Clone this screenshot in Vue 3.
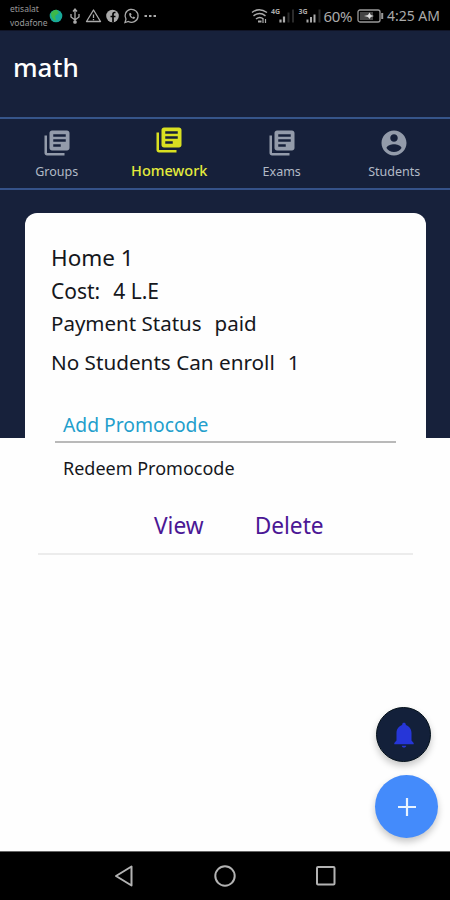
<script setup>
const tabs = [
  { label: 'Groups', icon: 'library', active: false },
  { label: 'Homework', icon: 'library', active: true },
  { label: 'Exams', icon: 'library', active: false },
  { label: 'Students', icon: 'account', active: false },
]
const paths = {
  library: 'M4 6H2v14c0 1.1.9 2 2 2h14v-2H4V6zm16-4H8c-1.100 0-2 .9-2 2v12c0 1.100.9 2 2 2h12c1.100 0 2-.9 2-2V4c0-1.100-.9-2-2-2zm-1 9H9V9h10v2zm-4 4H9v-2h6v2zm4-8H9V5h10v2z',
  account: 'M12 2C6.480 2 2 6.480 2 12s4.480 10 10 10 10-4.480 10-10S17.520 2 12 2zm0 3c1.660 0 3 1.340 3 3s-1.340 3-3 3-3-1.340-3-3 1.340-3 3-3zm0 14.200c-2.500 0-4.710-1.280-6-3.220.03-1.990 4-3.080 6-3.080 1.990 0 5.970 1.090 6 3.080-1.290 1.940-3.500 3.220-6 3.220z',
}
</script>

<template>
  <div class="screen">
    <div class="status">
      <div class="carriers"><span>etisalat</span><span>vodafone</span></div>
      <svg class="notes" width="110" height="18" viewBox="0 0 110 18" fill="none" stroke="#aaa" stroke-width="1.300">
        <circle cx="7" cy="9" r="6.300" fill="#18a999" stroke="none" />
        <path d="M2 6q4-4 6-3l2 3-4 3 1 5q-5-2-5-8z" fill="#3cb84a" stroke="none" />
        <path d="M26 3v12M22 7v3l4 3 4-3V7M24 4.500l2-2.500 2 2.500" />
        <circle cx="26" cy="15" r="1.200" fill="#aaa" />
        <path d="M44.500 3l7 11.500H37.500z" stroke-linejoin="round" /><path d="M44.500 7.500v3.500M44.500 12v1.300" />
        <circle cx="63.500" cy="9" r="6.300" fill="#aaa" stroke="none" />
        <path d="M66.500 5.500h-1q-1.500 0-1.500 2V15M61.500 9.500h5" stroke="#000" stroke-width="1.700" />
        <path d="M76 15.500l1-3.300a6.500 6.500 0 1 1 2.400 2.300z" />
        <path d="M80 6.500q.5 4.500 5 5.500l1.300-1.400-1.700-1-.9.8q-1.400-.6-1.900-1.900l.8-.9-.8-1.700z" fill="#aaa" stroke="none" />
        <path d="M95.500 9h2.500M100 9h2.500M104.500 9h2.500" stroke-width="2" />
      </svg>
      <svg class="signals" width="72" height="18" viewBox="0 0 72 18" fill="none" stroke="#aaa" stroke-width="1.500">
        <path d="M1 5.500q7-5.500 15 0M2.500 8.800q6-4.500 12 0M5 12q3.700-3 7.500 0" />
        <path d="M7 14.500h3.500" stroke-width="2" /><path d="M12 16v-4M14.500 12v4" stroke-width="1.200" />
        <text x="20" y="6.500">4G</text>
        <path d="M29.500 15.500v-3M33 15.500v-6" stroke-width="2.200" /><path d="M37.500 15.500v-10M42 15.500v-13" stroke="#2b2b2b" stroke-width="2" />
        <text x="47.500" y="6.500">3G</text>
        <path d="M56.500 15.500v-3M60 15.500v-5.500M63.500 15.500v-8" stroke-width="2" /><path d="M68.500 15.500v-13" stroke="#2b2b2b" stroke-width="2" />
      </svg>
      <span class="percent">60%</span>
      <svg class="battery" width="27" height="14" viewBox="0 0 27 14" fill="none" stroke="#999" stroke-width="1.300">
        <rect x="1" y="1" width="22" height="12" rx="2" /><path d="M3 3h13v8H3z" fill="#444" stroke="none" />
        <path d="M25.200 4v6" stroke-width="2" /><path d="M7 7l4-1 1.500-2.500L13.800 6l3.200 1-3.200 1-1.300 2L11 8z" fill="#ddd" stroke="none" />
      </svg>
      <span class="clock">4:25 AM</span>
    </div>

    <header class="title">math</header>
    <nav class="tabs">
      <div v-for="t in tabs" :key="t.label" class="tab" :class="{ active: t.active }">
        <svg width="30" height="30" viewBox="0 0 24 24" fill="currentColor"><path :d="paths[t.icon]" /></svg>
        <span>{{ t.label }}</span>
      </div>
    </nav>

    <main class="content">
      <section class="card">
        <h2 class="name">Home 1</h2>
        <p class="row cost"><span>Cost:</span><span>4 L.E</span></p>
        <p class="row payment"><span>Payment Status</span><span>paid</span></p>
        <p class="row enroll"><span>No Students Can enroll</span><span>1</span></p>
        <div class="promo">Add Promocode</div>
        <div class="redeem">Redeem Promocode</div>
        <div class="actions"><span class="view">View</span><span class="delete">Delete</span></div>
      </section>
      <div class="fabs">
        <div class="fab bell">
          <svg width="22" height="26" viewBox="0 0 22 26" fill="#2636d8"><path d="M11 25.500c1.300 0 2.200-.7 2.200-1.800H8.800c0 1.100.9 1.800 2.200 1.800zM18.500 18.500V11c0-4-2.300-6.800-5.700-8V2.300C12.800 1.300 12 .7 11 .7s-1.800.6-1.800 1.600V3C5.800 4.200 3.500 7 3.500 11v7.500L1.300 21v1.200h19.400V21z" /></svg>
        </div>
        <div class="fab add">
          <svg width="20" height="20" viewBox="0 0 20 20" stroke="#e8f3ff" stroke-width="2.200"><path d="M1 10h18M10 1v18" /></svg>
        </div>
      </div>
    </main>

    <footer class="navbar">
      <svg width="22" height="24" viewBox="0 0 22 24"><path d="M3 12L18.500 2.500v19z" /></svg>
      <svg width="24" height="24" viewBox="0 0 24 24"><circle cx="12" cy="12" r="9.700" /></svg>
      <svg width="22" height="24" viewBox="0 0 22 24"><rect x="2" y="3" width="17.500" height="17.500" rx="1" /></svg>
    </footer>
  </div>
</template>

<style>
body { background: #fff; }
</style>

<style scoped>
* { box-sizing: border-box; }
.screen {
  width: 450px; height: 900px; overflow: hidden;
  display: flex; flex-direction: column;
  font-family: "Noto Sans", sans-serif; color: #15171c; white-space: nowrap;
  background: linear-gradient(#17213b 438px, #fefefe 438px);
}
.status { height: 31px; background: #000; color: #aaa; display: flex; align-items: center; padding: 1px 10px 0; border-bottom: 1px solid #101426; }
.carriers { width: 40px; display: flex; flex-direction: column; font-size: 8.500px; line-height: 14px; color: #999; }
.notes { flex: none; }
.signals { flex: none; margin-left: 92px; }
.signals text { font: 700 7px "Noto Sans", sans-serif; fill: #aaa; stroke: none; }
.percent { width: 34px; font-size: 15px; letter-spacing: -0.300px; }
.battery { flex: none; }
.clock { margin-left: 3px; font-size: 14px; }
.title { height: 86px; padding: 15px 13px; color: #fff; font-size: 26px; line-height: 42px; font-weight: 500; }
.tabs { height: 73px; display: grid; grid-template-columns: repeat(4, 1fr); border-top: 2px solid #36558a; border-bottom: 2px solid #355289; background: #16203a; }
.tab { display: flex; flex-direction: column; align-items: center; padding: 9px 0 0 1px; color: #939baa; }
.tab svg { display: block; }
.tab span { font-size: 12.500px; line-height: 18px; margin-top: 5px; color: #b2bac6; }
.tab.active { color: #d9e021; padding-top: 6px; }
.tab.active span { color: #e4eb3c; font-size: 14.500px; line-height: 20px; margin-top: 5px; font-weight: 500; }
.content { flex: 1; padding: 23px 24px 0 25px; display: flex; flex-direction: column; }
.card { height: 342px; background: #fefefe; border-radius: 12px 12px 0 0; padding: 29px 13px 0; display: flex; flex-direction: column; }
.name, .row { margin: 0 13px; font-weight: 400; }
.name { font-size: 22.500px; line-height: 32px; }
.row { display: flex; gap: 13px; font-size: 20.500px; line-height: 32px; }
.cost { margin-top: 1px; font-size: 21px; }
.enroll { margin-top: 7px; font-size: 20.700px; }
.promo { margin: 25px 17px 0; padding: 0 8px; height: 40px; border-bottom: 2px solid #b9b9b9; color: #239fcc; font-size: 19.300px; line-height: 43px; }
.redeem { margin: 8px 25px 0; font-size: 18px; line-height: 34px; }
.actions { display: flex; margin-top: 19px; padding-left: 116px; gap: 51px; height: 69px; line-height: 44px; font-size: 22.700px; color: #4b1795; border-bottom: 2px solid #ececec; }
.fabs { margin-top: 152px; display: flex; flex-direction: column; align-items: flex-end; gap: 13px; margin-right: -12px; }
.fab { display: flex; align-items: center; justify-content: center; border-radius: 50%; box-shadow: 0 4px 7px rgba(0, 0, 0, .22); }
.bell { width: 55px; height: 55px; margin-right: 7px; background: #13203a; border: 1.500px solid #03101a; }
.add { width: 63px; height: 63px; background: #448bfb; }
.navbar { height: 49px; background: #000; border-top: 1px solid #666; display: flex; justify-content: center; align-items: center; gap: 78px; }
.navbar svg { fill: none; stroke: #b3b3b3; stroke-width: 2; stroke-linejoin: round; }
</style>
